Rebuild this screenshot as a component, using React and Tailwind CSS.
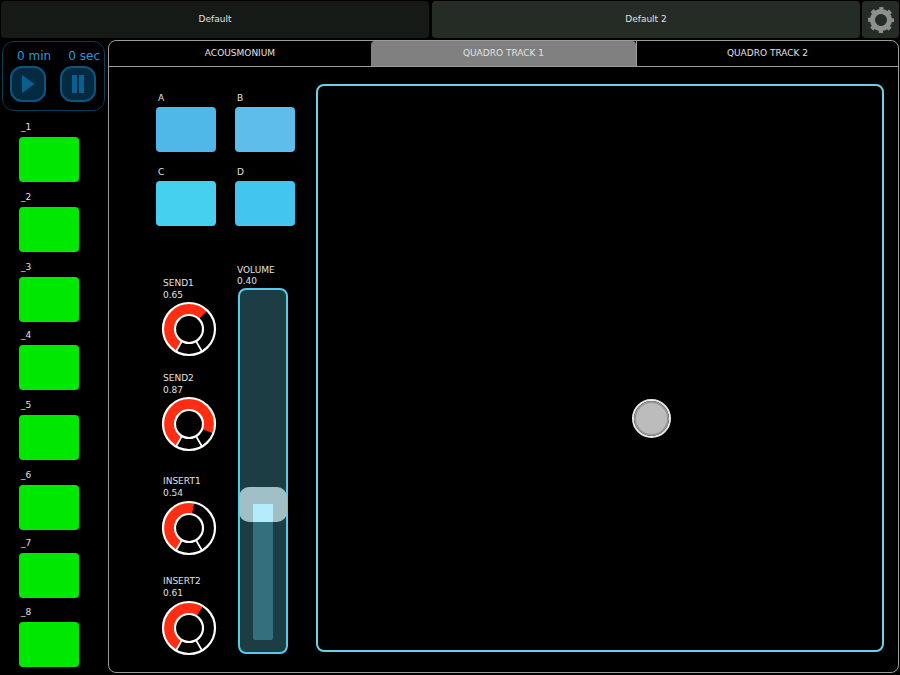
const FONT = "font-['DejaVu_Sans',sans-serif]";

const channels = [
  { name: "_1", gap: "mt-[10px]" },
  { name: "_2", gap: "mt-[9px]" },
  { name: "_3", gap: "mt-[9px]" },
  { name: "_4", gap: "mt-[7px]" },
  { name: "_5", gap: "mt-[9px]" },
  { name: "_6", gap: "mt-[9px]" },
  { name: "_7", gap: "mt-[7px]" },
  { name: "_8", gap: "mt-[8px]" },
];

const pads = [
  { name: "A", color: "bg-[#50b8e9]" },
  { name: "B", color: "bg-[#5fbdec]" },
  { name: "C", color: "bg-[#45d0ef]" },
  { name: "D", color: "bg-[#42c5ee]" },
];

const knobs = [
  { name: "SEND1", value: 0.65, gap: "", dial: "" },
  { name: "SEND2", value: 0.87, gap: "mt-[15px]", dial: "" },
  { name: "INSERT1", value: 0.54, gap: "mt-[23px]", dial: "mt-[1px]" },
  { name: "INSERT2", value: 0.61, gap: "mt-[19px]", dial: "mt-[1px]" },
];

function polar(r, deg) {
  // deg measured clockwise from straight down
  const a = (deg * Math.PI) / 180;
  return [28 - r * Math.sin(a), 28 + r * Math.cos(a)];
}

function Knob({ value }) {
  const end = 30 + value * 300;
  const [x1, y1] = polar(20, 30);
  const [x2, y2] = polar(20, end);
  const [a1, a2] = polar(14, 30);
  const [a3, a4] = polar(26, 30);
  const [b1, b2] = polar(14, -30);
  const [b3, b4] = polar(26, -30);
  return (
    <svg width="56" height="56" viewBox="0 0 56 56" className="block">
      <path
        d={`M${x1} ${y1}A20 20 0 ${end - 30 > 180 ? 1 : 0} 1 ${x2} ${y2}`}
        fill="none"
        stroke="#ff2d12"
        strokeWidth="11"
      />
      <circle cx="28" cy="28" r="26" fill="none" stroke="#fff" strokeWidth="2.2" />
      <circle cx="28" cy="28" r="14" fill="#000" stroke="#fff" strokeWidth="2.2" />
      <path d={`M${a1} ${a2}L${a3} ${a4}M${b1} ${b2}L${b3} ${b4}`} stroke="#fff" strokeWidth="1.8" />
    </svg>
  );
}

function Gear() {
  return (
    <svg width="28" height="28" viewBox="0 0 28 28">
      <circle cx="14" cy="14" r="11.5" fill="none" stroke="#8f8f8f" strokeWidth="3" strokeDasharray="4.2 4.83" strokeDashoffset="2.1" />
      <circle cx="14" cy="14" r="8.5" fill="none" stroke="#8f8f8f" strokeWidth="5" />
    </svg>
  );
}

function TransportButton({ children }) {
  return (
    <div className="flex h-[36px] w-[36px] items-center justify-center rounded-[12px] border-2 border-[#0c5581] bg-[#042a42]">
      {children}
    </div>
  );
}

export default function App() {
  return (
    <div className={`h-[675px] w-[900px] overflow-hidden bg-black text-[#e0e0e0] ${FONT}`}>
      <div className="flex h-[40px] gap-[3px] pl-[1px] pt-[1px]">
        <div className="flex h-[37px] w-[428px] items-center justify-center rounded-[4px] bg-[#161a17] pt-[1px] text-[9px]">Default</div>
        <div className="flex h-[37px] w-[428px] items-center justify-center rounded-[4px] bg-[#252c26] pt-[1px] text-[9px]">Default 2</div>
        <div className="-ml-[1px] flex h-[37px] w-[37px] items-center justify-center rounded-[4px] bg-[#252c26]">
          <Gear />
        </div>
      </div>

      <div className="flex">
        <div className="w-[108px] shrink-0">
          <div className="ml-[2px] mt-[1px] h-[70px] w-[103px] rounded-[12px] border border-[#0b3c58] pl-[7px] pr-[8px] pt-[7px]">
            <div className="flex justify-between text-[12px] leading-[14px] text-[#2598dc]">
              <span className="ml-[7px]">0 min</span>
              <span className="-mr-[4px]">0 sec</span>
            </div>
            <div className="mt-[3px] flex gap-[14px]">
              <TransportButton>
                <svg width="14" height="18" viewBox="0 0 14 18"><path d="M1 0L13.5 9L1 18Z" fill="#07608f" /></svg>
              </TransportButton>
              <TransportButton>
                <svg width="14" height="18" viewBox="0 0 14 18"><path d="M1 0H6V18H1ZM8 0H13V18H8Z" fill="#07608f" /></svg>
              </TransportButton>
            </div>
          </div>
          <div className="pl-[19px]">
            {channels.map((c) => (
              <div key={c.name} className={c.gap}>
                <div className="h-[12px] pl-[2px] text-[9px] leading-[12px]">{c.name}</div>
                <div className="mt-[4px] h-[45px] w-[60px] rounded-[4px] bg-[#00e800]" />
              </div>
            ))}
          </div>
        </div>

        <div className="h-[633px] w-[791px] rounded-[8px] border border-[#9c9c9c]">
          <div className="flex h-[26px] border-b border-[#9c9c9c] text-[9px]">
            <div className="flex w-[262px] items-center justify-center">ACOUSMONIUM</div>
            <div className="flex w-[265px] items-center justify-center rounded-t-[4px] bg-[#808080]">QUADRO TRACK 1</div>
            <div className="flex flex-1 items-center justify-center border-l border-[#9c9c9c]">QUADRO TRACK 2</div>
          </div>

          <div className="flex pl-[47px]">
            <div className="w-[160px] shrink-0">
              <div className="grid grid-cols-[60px_60px] gap-x-[19px] gap-y-[14px] pt-[25px]">
                {pads.map((p) => (
                  <div key={p.name}>
                    <div className="h-[15px] pl-[2px] text-[9px] leading-[12px]">{p.name}</div>
                    <div className={`h-[45px] rounded-[4px] ${p.color}`} />
                  </div>
                ))}
              </div>

              <div className="mt-[39px] flex">
                <div className="w-[81px] pl-[5px] pt-[12px]">
                  {knobs.map((k) => (
                    <div key={k.name} className={k.gap}>
                      <div className="pl-[2px] text-[9px] leading-[12px]">
                        <div>{k.name}</div>
                        <div>{k.value.toFixed(2)}</div>
                      </div>
                      <div className={k.dial}><Knob value={k.value} /></div>
                    </div>
                  ))}
                </div>
                <div>
                  <div className="mb-[1px] text-[9px] leading-[11px]">
                    <div>VOLUME</div>
                    <div>0.40</div>
                  </div>
                  <div className="relative ml-[1px] flex h-[366px] w-[50px] items-end justify-center rounded-[8px] border-2 border-[#55cbe8] bg-[#1d3d45] pb-[12px]">
                    <div className="h-[137px] w-[20px] rounded-[2px] bg-[#33707e]" />
                    <div className="absolute -left-[1px] -right-[1px] top-[197px] h-[35px] rounded-[10px] bg-[#a1bfc7]" />
                    <div className="absolute left-[13px] top-[214px] h-[18px] w-[20px] bg-[#b4ecfb]" />
                  </div>
                </div>
              </div>
            </div>

            <div className="relative mt-[17px] h-[568px] w-[568px] rounded-[8px] border-2 border-[#6bd2ea]">
              <div className="absolute left-[314px] top-[313px] flex h-[39px] w-[39px] items-center justify-center rounded-full border-2 border-[#e8e8e8]">
                <div className="h-[35px] w-[35px] rounded-full border-2 border-[#979797] bg-[#bcbcbc]" />
              </div>
            </div>
          </div>
        </div>
      </div>
    </div>
  );
}
